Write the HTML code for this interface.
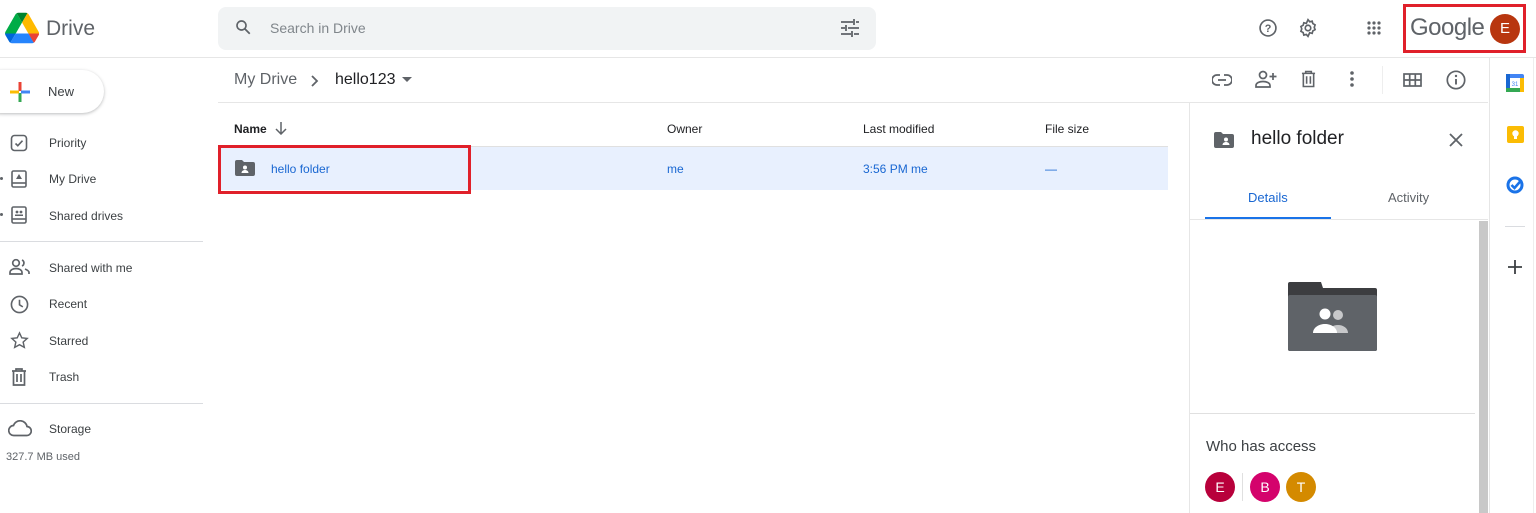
<!DOCTYPE html>
<html><head><meta charset="utf-8"><style>
*{box-sizing:border-box;margin:0;padding:0}
body{width:1536px;height:513px;overflow:hidden;background:#fff;font-family:"Liberation Sans",Arial,sans-serif;color:#3c4043;position:relative}
.a{position:absolute}
.t{font-size:12px;color:#3c4043}
svg{position:absolute}
</style></head><body>
<!-- header -->
<svg style="left:5px;top:12px" width="34" height="32" viewBox="0 0 87 78"><path d="M6.6 66.85l3.85 6.65c.8 1.4 1.95 2.5 3.3 3.3L27.5 53H0c0 1.55.4 3.1 1.2 4.5z" fill="#0066da"/><path d="M43.65 25L29.9 1.2c-1.35.8-2.5 1.9-3.3 3.3L1.2 48.5A9 9 0 000 53h27.5z" fill="#00ac47"/><path d="M73.55 76.8c1.35-.8 2.5-1.9 3.3-3.3l1.6-2.75 7.65-13.25c.8-1.4 1.2-2.95 1.2-4.5H59.8l5.85 11.5z" fill="#ea4335"/><path d="M43.65 25L57.4 1.2C56.05.4 54.5 0 52.9 0H34.4c-1.6 0-3.15.45-4.5 1.2z" fill="#00832d"/><path d="M59.8 53H27.5L13.75 76.8c1.35.8 2.9 1.2 4.5 1.2h50.8c1.6 0 3.15-.45 4.5-1.2z" fill="#2684fc"/><path d="M73.4 26.5L60.7 4.5c-.8-1.4-1.95-2.5-3.3-3.3L43.65 25 59.8 53h27.45c0-1.55-.4-3.1-1.2-4.5z" fill="#ffba00"/></svg>
<div class="a" style="left:46px;top:17px;font-size:21px;color:#5f6368">Drive</div>
<div class="a" style="left:218px;top:7px;width:658px;height:43px;background:#f1f3f4;border-radius:8px"></div>
<svg style="left:234px;top:18px" width="18" height="18" viewBox="0 0 24 24"><circle cx="10" cy="10" r="6" fill="none" stroke="#5f6368" stroke-width="2.2"/><path d="M14.5 14.5L21 21" stroke="#5f6368" stroke-width="2.4"/></svg>
<div class="a" style="left:270px;top:20px;font-size:14px;color:#80868b">Search in Drive</div>
<svg style="left:840px;top:19px" width="20" height="18" viewBox="0 0 20 18" stroke="#5f6368" stroke-width="1.8"><path d="M1 3h12M16 3h3M1 9h4M8 9h11M1 15h10M14 15h5M14 0v6M6 6v6M12 12v6"/></svg>
<svg style="left:1258px;top:18px" width="20" height="20" viewBox="0 0 24 24"><circle cx="12" cy="12" r="9.5" fill="none" stroke="#5f6368" stroke-width="2"/><text x="12" y="17" font-size="13" text-anchor="middle" fill="#5f6368" font-family="Liberation Sans" font-weight="bold">?</text></svg>
<svg style="left:1298px;top:18px" width="20" height="20" viewBox="0 0 24 24"><path d="M12 2l2 2.5 3-.8.8 3 2.7 1.5-1 3 1 2.8-2.7 1.5-.8 3-3-.8L12 22l-2-2.3-3 .8-.8-3L3.5 16l1-3-1-2.8 2.7-1.5.8-3 3 .8z" fill="none" stroke="#5f6368" stroke-width="2"/><circle cx="12" cy="12" r="3.3" fill="none" stroke="#5f6368" stroke-width="2"/></svg>
<svg style="left:1367px;top:21px" width="14" height="14" viewBox="0 0 14 14" fill="#5f6368"><circle cx="2" cy="2" r="1.6"/><circle cx="7" cy="2" r="1.6"/><circle cx="12" cy="2" r="1.6"/><circle cx="2" cy="7" r="1.6"/><circle cx="7" cy="7" r="1.6"/><circle cx="12" cy="7" r="1.6"/><circle cx="2" cy="12" r="1.6"/><circle cx="7" cy="12" r="1.6"/><circle cx="12" cy="12" r="1.6"/></svg>
<div class="a" style="left:1403px;top:4px;width:123px;height:49px;border:3px solid #e0202a"></div>
<div class="a" style="left:1410px;top:14px;font-size:24px;color:#5f6368;letter-spacing:-0.5px">Google</div>
<div class="a" style="left:1490px;top:14px;width:30px;height:30px;border-radius:50%;background:#b8360f;color:#fff;font-size:15px;text-align:center;line-height:30px">E</div>
<div class="a" style="left:0;top:57px;width:1536px;height:1px;background:#e6e6e6"></div>
<!-- sidebar -->
<div class="a" style="left:-20px;top:70px;width:124px;height:43px;border-radius:22px;background:#fff;box-shadow:0 1px 3px rgba(60,64,67,.35)"></div>
<svg style="left:9px;top:81px" width="22" height="22" viewBox="0 0 22 22"><path d="M11 1v9" stroke="#ea4335" stroke-width="3"/><path d="M11 12v9" stroke="#34a853" stroke-width="3"/><path d="M1 11h9" stroke="#fbbc04" stroke-width="3"/><path d="M12 11h9" stroke="#4285f4" stroke-width="3"/></svg>
<div class="a" style="left:48px;top:84px;font-size:13px;color:#3c4043">New</div>
<svg style="left:10px;top:134px" width="18" height="18" viewBox="0 0 18 18"><rect x="1.5" y="1.5" width="15" height="15" rx="3" fill="none" stroke="#5f6368" stroke-width="1.6"/><path d="M5.5 9.5l2.3 2.2 4.7-5" fill="none" stroke="#5f6368" stroke-width="1.6"/></svg>
<div class="a t" style="left:49px;top:136px">Priority</div>
<div class="a" style="left:0;top:177px;width:3px;height:3px;border-radius:50%;background:#5f6368"></div>
<svg style="left:10px;top:170px" width="18" height="18" viewBox="0 0 18 18"><rect x="2" y="1" width="14" height="16" rx="1.5" fill="none" stroke="#5f6368" stroke-width="1.6"/><path d="M2 13h14" stroke="#5f6368" stroke-width="1.6"/><path d="M9 4l3 5H6z" fill="#5f6368"/></svg>
<div class="a t" style="left:49px;top:172px">My Drive</div>
<div class="a" style="left:0;top:213px;width:3px;height:3px;border-radius:50%;background:#5f6368"></div>
<svg style="left:10px;top:206px" width="18" height="18" viewBox="0 0 18 18"><rect x="2" y="1" width="14" height="16" rx="1.5" fill="none" stroke="#5f6368" stroke-width="1.6"/><path d="M2 13h14" stroke="#5f6368" stroke-width="1.6"/><circle cx="7" cy="6" r="1.4" fill="#5f6368"/><circle cx="11" cy="6" r="1.4" fill="#5f6368"/><path d="M5 10h8v-1.5H5z" fill="#5f6368"/></svg>
<div class="a t" style="left:49px;top:209px">Shared drives</div>
<div class="a" style="left:0;top:241px;width:203px;height:1px;background:#dadce0"></div>
<svg style="left:9px;top:258px" width="22" height="18" viewBox="0 0 22 18" fill="none" stroke="#5f6368" stroke-width="1.7"><circle cx="7" cy="5" r="3.3"/><path d="M1 16v-1.5c0-2.5 3-4 6-4s6 1.5 6 4V16z"/><path d="M13 2a3.3 3.3 0 010 6M16 11c2 .8 4 2 4 3.5V16"/></svg>
<div class="a t" style="left:49px;top:261px">Shared with me</div>
<svg style="left:10px;top:295px" width="19" height="19" viewBox="0 0 20 20" fill="none" stroke="#5f6368" stroke-width="1.7"><circle cx="10" cy="10" r="8.5"/><path d="M10 5v5.3l3.5 2.2"/></svg>
<div class="a t" style="left:49px;top:297px">Recent</div>
<svg style="left:10px;top:331px" width="19" height="19" viewBox="0 0 24 24" fill="none" stroke="#5f6368" stroke-width="1.8"><path d="M12 2.5l2.9 6.2 6.8.7-5.1 4.6 1.5 6.7L12 17.3l-6.1 3.4 1.5-6.7-5.1-4.6 6.8-.7z"/></svg>
<div class="a t" style="left:49px;top:334px">Starred</div>
<svg style="left:11px;top:368px" width="16" height="18" viewBox="0 0 16 18" fill="none" stroke="#5f6368" stroke-width="1.7"><path d="M1 3h14M5 3V1h6v2M2.5 3v14h11V3M6 6v8M10 6v8"/></svg>
<div class="a t" style="left:49px;top:370px">Trash</div>
<div class="a" style="left:0;top:403px;width:203px;height:1px;background:#dadce0"></div>
<svg style="left:8px;top:420px" width="24" height="17" viewBox="0 0 24 17" fill="none" stroke="#5f6368" stroke-width="1.7"><path d="M6 15.5h12.5a4.5 4.5 0 00.5-9A7 7 0 005.5 5.5 5 5 0 006 15.5z"/></svg>
<div class="a t" style="left:49px;top:422px">Storage</div>
<div class="a" style="left:6px;top:451px;font-size:11px;color:#5f6368">327.7 MB used</div>
<!-- breadcrumb -->
<div class="a" style="left:234px;top:71px;font-size:16px;color:#5f6368">My Drive</div>
<svg style="left:310px;top:74px" width="10" height="14" viewBox="0 0 10 14"><path d="M2 2l5 5-5 5" fill="none" stroke="#5f6368" stroke-width="1.8"/></svg>
<div class="a" style="left:335px;top:71px;font-size:16px;color:#202124">hello123</div>
<svg style="left:402px;top:77px" width="10" height="6"><path d="M0 0h10L5 5z" fill="#5f6368"/></svg>
<svg style="left:1212px;top:73px" width="20" height="14" viewBox="0 0 20 14" fill="none" stroke="#5f6368" stroke-width="1.8"><path d="M8 2H5a5 5 0 000 10h3M12 2h3a5 5 0 010 10h-3M6 7h8"/></svg>
<svg style="left:1255px;top:70px" width="22" height="19" viewBox="0 0 22 19" fill="none" stroke="#5f6368" stroke-width="1.7"><circle cx="8" cy="5" r="3.5"/><path d="M1 17v-1.5c0-2.7 3.5-4 7-4s7 1.3 7 4V17zM18 3v7M14.5 6.5h7"/></svg>
<svg style="left:1301px;top:70px" width="15" height="18" viewBox="0 0 16 18" fill="none" stroke="#5f6368" stroke-width="1.7"><path d="M1 3h14M5 3V1h6v2M2.5 3v14h11V3M6 6v8M10 6v8"/></svg>
<svg style="left:1350px;top:71px" width="4" height="16" fill="#5f6368"><circle cx="2" cy="2" r="1.8"/><circle cx="2" cy="8" r="1.8"/><circle cx="2" cy="14" r="1.8"/></svg>
<div class="a" style="left:1382px;top:66px;width:1px;height:28px;background:#eee"></div>
<svg style="left:1403px;top:73px" width="19" height="14" viewBox="0 0 19 14" fill="none" stroke="#5f6368" stroke-width="1.7"><rect x="1" y="1" width="17" height="12"/><path d="M1 7h17M6.7 1v12M12.3 1v12"/></svg>
<svg style="left:1446px;top:70px" width="20" height="20" viewBox="0 0 20 20"><circle cx="10" cy="10" r="8.7" fill="none" stroke="#5f6368" stroke-width="1.7"/><path d="M10 9v5.5" stroke="#5f6368" stroke-width="1.9"/><circle cx="10" cy="6" r="1.2" fill="#5f6368"/></svg>
<div class="a" style="left:218px;top:102px;width:1270px;height:1px;background:#e6e6e6"></div>
<!-- table -->
<div class="a" style="left:234px;top:122px;font-size:12px;color:#202124;font-weight:bold">Name</div>
<svg style="left:275px;top:121px" width="12" height="14" viewBox="0 0 12 14" fill="none" stroke="#5f6368" stroke-width="1.5"><path d="M6 1v12M1 8l5 5 5-5"/></svg>
<div class="a t" style="left:667px;top:122px;color:#202124">Owner</div>
<div class="a t" style="left:863px;top:122px;color:#202124">Last modified</div>
<div class="a t" style="left:1045px;top:122px;color:#202124">File size</div>
<div class="a" style="left:218px;top:146px;width:950px;height:1px;background:#e0e0e0"></div>
<div class="a" style="left:218px;top:147px;width:950px;height:43px;background:#e8f0fe"></div>
<div class="a" style="left:218px;top:145px;width:253px;height:49px;border:3px solid #e0202a"></div>
<svg style="left:235px;top:160px" width="20" height="16" viewBox="0 0 20 16"><path d="M0 2a2 2 0 012-2h5l2 2h9a2 2 0 012 2v10a2 2 0 01-2 2H2a2 2 0 01-2-2z" fill="#5f6368"/><circle cx="10" cy="7.5" r="2" fill="#fff"/><path d="M6.5 13c0-2 1.8-3 3.5-3s3.5 1 3.5 3z" fill="#fff"/></svg>
<div class="a" style="left:271px;top:162px;font-size:12px;color:#1967d2">hello folder</div>
<div class="a" style="left:667px;top:162px;font-size:12px;color:#1967d2">me</div>
<div class="a" style="left:863px;top:162px;font-size:12px;color:#1967d2">3:56 PM me</div>
<div class="a" style="left:1045px;top:162px;font-size:12px;color:#1967d2">—</div>
<!-- details -->
<div class="a" style="left:1189px;top:103px;width:1px;height:410px;background:#e6e6e6"></div>
<svg style="left:1214px;top:132px" width="20" height="16" viewBox="0 0 20 16"><path d="M0 2a2 2 0 012-2h5l2 2h9a2 2 0 012 2v10a2 2 0 01-2 2H2a2 2 0 01-2-2z" fill="#5f6368"/><circle cx="12" cy="7.5" r="2" fill="#fff"/><path d="M8.5 13c0-2 1.8-3 3.5-3s3.5 1 3.5 3z" fill="#fff"/></svg>
<div class="a" style="left:1251px;top:128px;font-size:19px;color:#202124">hello folder</div>
<svg style="left:1449px;top:133px" width="14" height="14" viewBox="0 0 14 14"><path d="M1 1l12 12M13 1L1 13" stroke="#5f6368" stroke-width="1.8"/></svg>
<div class="a" style="left:1248px;top:190px;font-size:13px;color:#1967d2">Details</div>
<div class="a" style="left:1388px;top:190px;font-size:13px;color:#5f6368">Activity</div>
<div class="a" style="left:1205px;top:217px;width:126px;height:3px;background:#1a73e8"></div>
<div class="a" style="left:1190px;top:219px;width:298px;height:1px;background:#e6e6e6"></div>
<div class="a" style="left:1479px;top:221px;width:9px;height:292px;background:#c8c8c8"></div>
<svg style="left:1288px;top:282px" width="89" height="69" viewBox="0 0 89 69"><path d="M2 0h31l2 6h52a2 2 0 012 2v59a2 2 0 01-2 2H2a2 2 0 01-2-2V2a2 2 0 012-2z" fill="#3c3d40"/><rect x="0" y="13" width="89" height="56" rx="2" fill="#5f6368"/><circle cx="50" cy="33" r="5" fill="#c7c8ca"/><path d="M40 51c0-5 5-8 10-8s10 3 10 8z" fill="#c7c8ca"/><circle cx="37" cy="32" r="5.5" fill="#fff"/><path d="M25 51c0-5.5 6-9 12-9s12 3.5 12 9z" fill="#fff"/></svg>
<div class="a" style="left:1190px;top:413px;width:285px;height:1px;background:#e0e0e0"></div>
<div class="a" style="left:1206px;top:438px;font-size:15px;color:#3c4043">Who has access</div>
<div class="a" style="left:1205px;top:472px;width:30px;height:30px;border-radius:50%;background:#b8003b;color:#fff;font-size:14px;text-align:center;line-height:30px">E</div>
<div class="a" style="left:1242px;top:473px;width:1px;height:28px;background:#e0e0e0"></div>
<div class="a" style="left:1250px;top:472px;width:30px;height:30px;border-radius:50%;background:#d4036c;color:#fff;font-size:14px;text-align:center;line-height:30px">B</div>
<div class="a" style="left:1286px;top:472px;width:30px;height:30px;border-radius:50%;background:#d48a00;color:#fff;font-size:14px;text-align:center;line-height:30px">T</div>
<!-- right rail -->
<div class="a" style="left:1489px;top:58px;width:1px;height:455px;background:#e6e6e6"></div>
<svg style="left:1506px;top:74px" width="18" height="18" viewBox="0 0 18 18"><rect x="0" y="0" width="18" height="18" rx="2" fill="#4285f4"/><rect x="0" y="14" width="14" height="4" fill="#34a853"/><rect x="14" y="4" width="4" height="14" fill="#fbbc04"/><rect x="0" y="0" width="4" height="14" fill="#1967d2"/><rect x="4" y="4" width="10" height="10" fill="#fff"/><text x="9" y="12" font-size="6" text-anchor="middle" fill="#4285f4" font-family="Liberation Sans">31</text></svg>
<svg style="left:1507px;top:126px" width="17" height="17" viewBox="0 0 17 17"><rect width="17" height="17" rx="2" fill="#fbbc04"/><circle cx="8.5" cy="7.5" r="3.2" fill="#fff"/><rect x="7" y="10.5" width="3" height="2.5" fill="#fff"/></svg>
<svg style="left:1506px;top:176px" width="18" height="18" viewBox="0 0 18 18"><circle cx="9" cy="9" r="7" fill="none" stroke="#1a73e8" stroke-width="3"/><path d="M5.5 9l3 3 7-8" fill="none" stroke="#1a73e8" stroke-width="2.6"/></svg>
<div class="a" style="left:1505px;top:226px;width:20px;height:1px;background:#dadce0"></div>
<svg style="left:1508px;top:260px" width="14" height="14"><path d="M7 0v14M0 7h14" stroke="#3c4043" stroke-width="1.8"/></svg>
<div class="a" style="left:1533px;top:58px;width:1px;height:455px;background:#eee"></div>
</body></html>
